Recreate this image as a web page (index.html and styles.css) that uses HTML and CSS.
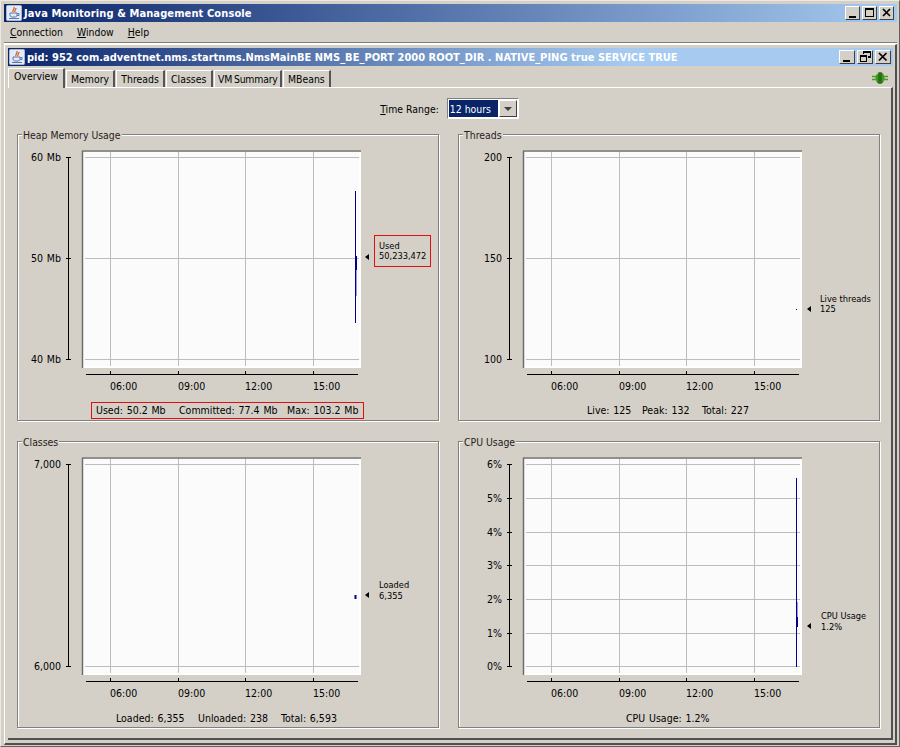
FILE: index.html
```html
<!DOCTYPE html>
<html lang="en">
<head>
    <meta charset="UTF-8">
    <title>Java Monitoring &amp; Management Console</title>
    <link rel="stylesheet" href="styles.css">
</head>
<body>
<div class="window">
    <div class="titlebar main-title">
        <svg class="java-icon" width="16" height="16" viewBox="0 0 16 16"><rect x="0.5" y="0.500" width="15" height="15" rx="1" fill="#e4eaf6" stroke="#a8b6d0"/><path d="M8 2c1 2-2 3-1 5M10 3c0 2-2 2-1 4" fill="none" stroke="#d8601c" stroke-width="1.300"/><path d="M4 8h7v2c0 1.500-1 2-2 2H6c-1 0-2-.5-2-2zM11 8.500h2v2h-2" fill="none" stroke="#5a78a8"/><path d="M3 13.500h10" stroke="#5a78a8"/></svg>
        <span class="title-text">Java Monitoring &amp; Management Console</span>
        <div class="win-buttons">
            <span class="win-btn"><svg viewBox="0 0 13 11" width="13" height="11"><path d="M3 9h7v2H3z"/></svg></span>
            <span class="win-btn"><svg viewBox="0 0 13 11" width="13" height="11"><path d="M2 1h9v9H2zM3 3v6h7V3z" fill-rule="evenodd"/></svg></span>
            <span class="win-btn"><svg viewBox="0 0 13 11" width="13" height="11"><path d="M3 2l7 7M10 2l-7 7" fill="none" stroke="#000" stroke-width="1.700"/></svg></span>
        </div>
    </div>
    <div class="menubar">
        <span><u>C</u>onnection</span>
        <span><u>W</u>indow</span>
        <span><u>H</u>elp</span>
    </div>
    <div class="frame">
        <div class="titlebar inner-title">
            <svg class="java-icon" width="16" height="16" viewBox="0 0 16 16"><rect x="0.5" y="0.500" width="15" height="15" rx="1" fill="#e4eaf6" stroke="#a8b6d0"/><path d="M8 2c1 2-2 3-1 5M10 3c0 2-2 2-1 4" fill="none" stroke="#d8601c" stroke-width="1.300"/><path d="M4 8h7v2c0 1.500-1 2-2 2H6c-1 0-2-.5-2-2zM11 8.500h2v2h-2" fill="none" stroke="#5a78a8"/><path d="M3 13.500h10" stroke="#5a78a8"/></svg>
            <span class="title-text">pid: 952 com.adventnet.nms.startnms.NmsMainBE NMS_BE_PORT 2000 ROOT_DIR . NATIVE_PING true SERVICE TRUE</span>
            <div class="win-buttons">
                <span class="win-btn"><svg viewBox="0 0 14 11" width="14" height="11"><path d="M3 9h7v2H3z"/></svg></span>
                <span class="win-btn"><svg viewBox="0 0 14 11" width="14" height="11"><path d="M5 0h8v7h-3V5h2V2H6v1H5zM2 4h7v7H2zM3 6v4h5V6z" fill-rule="evenodd"/></svg></span>
                <span class="win-btn"><svg viewBox="0 0 14 11" width="14" height="11"><path d="M3 2l7.500 7.500M10.500 2L3 9.500" fill="none" stroke="#000" stroke-width="1.700"/></svg></span>
            </div>
        </div>
        <div class="tabrow">
            <span class="tab selected">Overview</span>
            <span class="tab">Memory</span>
            <span class="tab">Threads</span>
            <span class="tab">Classes</span>
            <span class="tab tab-vm">VM Summary</span>
            <span class="tab">MBeans</span>
            <svg class="conn-icon" width="16" height="12" viewBox="0 0 16 12"><path d="M0 4.500h4M0 7.500h4M12 4.500h4M12 7.500h4" stroke="#4c9c2c" stroke-width="1.500"/><ellipse cx="8" cy="6" rx="4.500" ry="6" fill="#3f9a22"/><path d="M7 .5v11M9 .5v11" stroke="#14480c"/><path d="M4.500 3q1-2 2-2" stroke="#a6e080" fill="none"/></svg>
        </div>
        <div class="tabpane">
            <div class="range-row">
                <span class="range-label"><u>T</u>ime Range:</span>
                <span class="combo"><span class="combo-value">12 hours</span><span class="combo-btn"><i></i></span></span>
            </div>
            <div class="chart-grid">

                <div class="panel">
                    <span class="panel-title">Heap Memory Usage</span>
                    <svg class="chart" viewBox="18 135 420 285" width="420" height="285">
                        <use href="#plot"/>
                        <path class="grid" d="M85 157.500H359M85 258.500H359M85 359.500H359"/>
                        <line class="axis" x1="68.500" y1="157" x2="68.500" y2="360"/>
                        <path class="axis" d="M66 157.500h5M66 258.500h5M66 359.500h5"/>
                        <text class="lbl end" x="61" y="161">60 Mb</text>
                        <text class="lbl end" x="61" y="262">50 Mb</text>
                        <text class="lbl end" x="61" y="363">40 Mb</text>
                        <path class="series" d="M355.500 191V323"/>
                        <path class="series" d="M356.500 256V270"/>
                        <path class="series fade" d="M356.500 270V296"/>
                        <path class="marker" d="M365 257l4-3v6z"/>
                        <rect class="redbox" x="374.500" y="235.500" width="56" height="31"/>
                        <text class="note" x="379" y="249">Used</text>
                        <text class="note" x="379" y="259">50,233,472</text>
                        <rect class="redbox" x="91.500" y="402.500" width="272" height="16"/>
                        <text class="lbl" x="96" y="414">Used: 50.2 Mb</text>
                        <text class="lbl" x="179" y="414">Committed: 77.4 Mb</text>
                        <text class="lbl" x="287" y="414">Max: 103.2 Mb</text>
                    </svg>
                </div>

                <div class="panel">
                    <span class="panel-title">Threads</span>
                    <svg class="chart" viewBox="459 135 420 285" width="420" height="285">
                        <use href="#plot" x="441"/>
                        <path class="grid" d="M526 157.500H800M526 258.500H800M526 359.500H800"/>
                        <line class="axis" x1="509.500" y1="157" x2="509.500" y2="360"/>
                        <path class="axis" d="M507 157.500h5M507 258.500h5M507 359.500h5"/>
                        <text class="lbl end" x="502" y="161">200</text>
                        <text class="lbl end" x="502" y="262">150</text>
                        <text class="lbl end" x="502" y="363">100</text>
                        <path class="series" d="M796.500 309v1"/>
                        <path class="marker" d="M807 309l4-3v6z"/>
                        <text class="note" x="820" y="302">Live threads</text>
                        <text class="note" x="820" y="312">125</text>
                        <text class="lbl" x="587" y="414">Live: 125</text>
                        <text class="lbl" x="642" y="414">Peak: 132</text>
                        <text class="lbl" x="702" y="414">Total: 227</text>
                    </svg>
                </div>

                <div class="panel">
                    <span class="panel-title">Classes</span>
                    <svg class="chart" viewBox="18 442 420 285" width="420" height="285">
                        <use href="#plot" y="307"/>
                        <path class="grid" d="M85 464.500H359M85 666.500H359"/>
                        <line class="axis" x1="68.500" y1="464" x2="68.500" y2="667"/>
                        <path class="axis" d="M66 464.500h5M66 666.500h5"/>
                        <text class="lbl end" x="61" y="468">7,000</text>
                        <text class="lbl end" x="61" y="670">6,000</text>
                        <path class="series wide" d="M355.500 595v4"/>
                        <path class="marker" d="M365 595l4-3v6z"/>
                        <text class="note" x="379" y="588">Loaded</text>
                        <text class="note" x="379" y="599">6,355</text>
                        <text class="lbl" x="116" y="722">Loaded: 6,355</text>
                        <text class="lbl" x="198" y="722">Unloaded: 238</text>
                        <text class="lbl" x="281" y="722">Total: 6,593</text>
                    </svg>
                </div>

                <div class="panel">
                    <span class="panel-title">CPU Usage</span>
                    <svg class="chart" viewBox="459 442 420 285" width="420" height="285">
                        <use href="#plot" x="441" y="307"/>
                        <path class="grid" d="M526 464.500H800M526 498.500H800M526 532.500H800M526 565.500H800M526 599.500H800M526 633.500H800M526 666.500H800"/>
                        <line class="axis" x1="509.500" y1="464" x2="509.500" y2="667"/>
                        <path class="axis" d="M507 464.500h5M507 498.500h5M507 532.500h5M507 565.500h5M507 599.500h5M507 633.500h5M507 666.500h5"/>
                        <text class="lbl end" x="502" y="468">6%</text>
                        <text class="lbl end" x="502" y="502">5%</text>
                        <text class="lbl end" x="502" y="536">4%</text>
                        <text class="lbl end" x="502" y="569">3%</text>
                        <text class="lbl end" x="502" y="603">2%</text>
                        <text class="lbl end" x="502" y="637">1%</text>
                        <text class="lbl end" x="502" y="670">0%</text>
                        <path class="series" d="M796.500 478V667"/>
                        <path class="series" d="M797.500 617V627"/>
                        <path class="series fade" d="M797.500 602V617"/>
                        <path class="marker" d="M807 626l4-3v6z"/>
                        <text class="note" x="821" y="619">CPU Usage</text>
                        <text class="note" x="821" y="630">1.2%</text>
                        <text class="lbl" x="626" y="722">CPU Usage: 1.2%</text>
                    </svg>
                </div>

            </div>
        </div>
    </div>
</div>

<!-- shared plot background, drawn at heap panel coordinates -->
<svg class="defs" width="0" height="0">
    <defs>
        <g id="plot">
            <rect x="82" y="150" width="279" height="218" fill="#ffffff"/>
            <rect x="84" y="152" width="275" height="214" fill="#fbfbfb"/>
            <path d="M82.500 368V150.500M82 151H361" stroke="#6e6c66" fill="none" stroke-width="1.500"/>
            <path class="grid" d="M110.500 152V366M178.500 152V366M245.500 152V366M313.500 152V366"/>
            <path class="axis" d="M86 374.500H358M110.500 371v3M178.500 371v3M245.500 371v3M313.500 371v3"/>
            <text class="lbl" x="110" y="390">06:00</text>
            <text class="lbl" x="178" y="390">09:00</text>
            <text class="lbl" x="245" y="390">12:00</text>
            <text class="lbl" x="313" y="390">15:00</text>
        </g>
    </defs>
</svg>
</body>
</html>
```

FILE: styles.css
```css
html, body {
    margin: 0;
    padding: 0;
    background: #d4d0c8;
}
body {
    font-family: "DejaVu Sans Condensed", "DejaVu Sans", sans-serif;
    font-size: 10.4px;
    color: #000;
}
.defs {
    position: absolute;
}
.window {
    width: 900px;
    height: 747px;
    box-sizing: border-box;
    padding: 3px 2px 1px 3px;
    display: flex;
    flex-direction: column;
    border: 1px solid #606060;
    border-top-color: #ece9e2;
    border-left-color: #ece9e2;
    overflow: hidden;
}

/* title bars */
.titlebar {
    display: flex;
    align-items: center;
    color: #fff;
    font-weight: bold;
    font-size: 11px;
    flex: none;
    height: 18px;
}
.main-title {
    padding-left: 2px;
    letter-spacing: 0.11px;
    background: linear-gradient(to right, #0a246a, #a6caf0);
}
.inner-title {
    padding-left: 1px;
    letter-spacing: 0.02px;
    background: linear-gradient(to right, #0a246a, #a6caf0 70%);
}
.java-icon {
    flex: none;
    margin-right: 2px;
}
.title-text {
    white-space: nowrap;
}
.win-buttons {
    margin-left: auto;
    display: flex;
    gap: 2px;
    padding-right: 2px;
}
.win-btn {
    width: 16px;
    height: 14px;
    box-sizing: border-box;
    background: #d4d0c8;
    border: 1px solid;
    border-color: #fff #404040 #404040 #fff;
    display: block;
}
.win-btn svg {
    display: block;
}
.main-title .win-buttons {
    padding-right: 3px;
}
.main-title .win-btn {
    width: 15px;
}

/* menu */
.menubar {
    height: 20px;
    display: flex;
    align-items: center;
    gap: 14px;
    padding-left: 6px;
    flex: none;
    border-bottom: 1px solid #808080;
    box-shadow: 0 1px 0 #fff;
}

/* inner frame */
.frame {
    flex: 1;
    margin-top: 1px;
    padding: 3px 2px 3px 3px;
    display: flex;
    flex-direction: column;
    border-top: 1px solid #fff;
    border-left: 1px solid #fff;
    border-right: 2px solid #505050;
    border-bottom: 2px solid #505050;
    min-height: 0;
}
.tabrow {
    height: 21px;
    display: flex;
    align-items: flex-end;
    flex: none;
}
.tab {
    height: 17px;
    line-height: 17px;
    box-sizing: border-box;
    padding: 0 4.25px 0 4px;
    margin-left: 1px;
    border-left: 1px solid #fff;
    border-top: 1px solid #fff;
    border-right: 2px solid #555;
    white-space: nowrap;
}
.tab.selected {
    height: 20px;
    line-height: 15px;
    margin-left: 0;
    padding: 0 5px 3px 5px;
    position: relative;
    top: 1px;
    background: #d4d0c8;
}
.tab.tab-vm {
    padding-right: 2.25px;
    padding-left: 3.5px;
    word-spacing: -1px;
    letter-spacing: -0.2px;
}
.conn-icon {
    margin-left: auto;
    margin-right: 5px;
    margin-bottom: 3px;
}
.tabpane {
    flex: 1;
    border-top: 1px solid #fff;
    border-right: 2px solid #505050;
    border-bottom: 2px solid #505050;
    display: flex;
    flex-direction: column;
    min-height: 0;
}
.range-row {
    height: 46px;
    display: flex;
    align-items: center;
    justify-content: center;
    gap: 8px;
    flex: none;
    padding-bottom: 5px;
    box-sizing: border-box;
}
.combo {
    width: 72px;
    height: 21px;
    box-sizing: border-box;
    display: flex;
    gap: 1px;
    padding: 1px;
    background: #fff;
    border: 1px solid;
    border-color: #808080 #fff #fff #808080;
}
.combo-value {
    flex: 1;
    background: #0a246a;
    color: #fff;
    line-height: 16px;
    padding: 1px 0 0 1px;
}
.combo-btn {
    width: 18px;
    box-sizing: border-box;
    background: #d4d0c8;
    border: 1px solid;
    border-color: #fff #404040 #404040 #fff;
    display: flex;
    align-items: center;
    justify-content: center;
}
.combo-btn i {
    width: 0;
    height: 0;
    border-left: 4px solid transparent;
    border-right: 4px solid transparent;
    border-top: 4px solid #404040;
}

/* charts */
.chart-grid {
    display: grid;
    grid-template-columns: 422px 422px;
    grid-template-rows: 287px 287px;
    column-gap: 19px;
    row-gap: 20px;
    padding-left: 9px;
}
.panel {
    position: relative;
    border: 1px solid #808080;
    box-shadow: inset 1px 1px 0 #fff, 1px 1px 0 #fff;
}
.panel-title {
    position: absolute;
    left: 4px;
    top: -6px;
    padding: 0 1px;
    line-height: 13px;
    background: #d4d0c8;
    color: #2a1a1a;
}
.chart {
    display: block;
}
.lbl {
    font-size: 10.5px;
    word-spacing: 0.8px;
    fill: #000;
}
.lbl.end {
    text-anchor: end;
}
.note {
    font-size: 9.2px;
    fill: #000;
}
.axis {
    stroke: #000;
    fill: none;
}
.grid {
    stroke: #bdbdb9;
    fill: none;
}
.series {
    stroke: #00008c;
    fill: none;
}
.series.wide {
    stroke-width: 2;
}
.series.fade {
    stroke: #9a9ad8;
}
.marker {
    fill: #000;
}
.redbox {
    fill: none;
    stroke: #e01010;
}
```
